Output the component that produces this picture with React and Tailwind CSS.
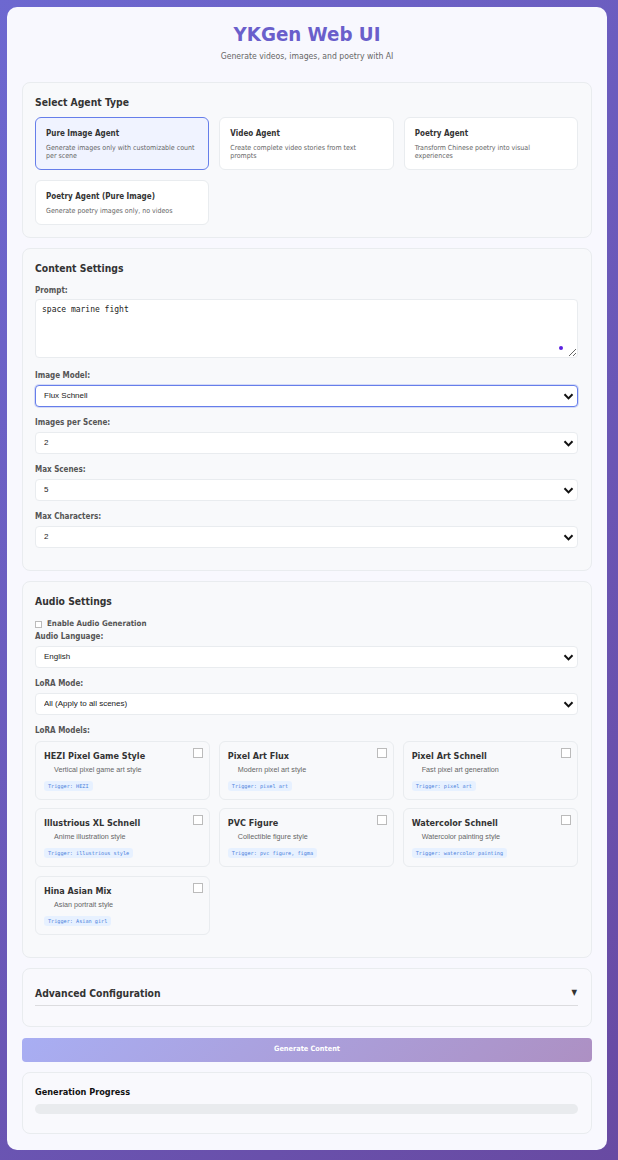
const font = "[font-family:'DejaVu_Sans',sans-serif] [font-stretch:condensed]";
const selectFont = "font-['Liberation_Sans',sans-serif]";
const monoFont = "font-['DejaVu_Sans_Mono',monospace] [font-stretch:normal]";

const agents = [
  { name: "Pure Image Agent", desc: "Generate images only with customizable count per scene", active: true },
  { name: "Video Agent", desc: "Create complete video stories from text prompts" },
  { name: "Poetry Agent", desc: "Transform Chinese poetry into visual experiences" },
  { name: "Poetry Agent (Pure Image)", desc: "Generate poetry images only, no videos" },
];

const loras = [
  { name: "HEZI Pixel Game Style", desc: "Vertical pixel game art style", trigger: "HEZI" },
  { name: "Pixel Art Flux", desc: "Modern pixel art style", trigger: "pixel art" },
  { name: "Pixel Art Schnell", desc: "Fast pixel art generation", trigger: "pixel art" },
  { name: "Illustrious XL Schnell", desc: "Anime illustration style", trigger: "illustrious style" },
  { name: "PVC Figure", desc: "Collectible figure style", trigger: "pvc figure, figma" },
  { name: "Watercolor Schnell", desc: "Watercolor painting style", trigger: "watercolor painting" },
  { name: "Hina Asian Mix", desc: "Asian portrait style", trigger: "Asian girl" },
];

function Section({ title, children }) {
  return (
    <section className="rounded-[8px] border border-[#e9ecef] bg-[#f8f9fb] pt-3 pr-[13px] pb-[11.5px] pl-3">
      {title && <h2 className="mb-[9.5px] text-[10.3px] leading-[14px] font-bold text-[#333]">{title}</h2>}
      {children}
    </section>
  );
}

function Label({ children }) {
  return <label className="mb-[2px] block text-[8px] leading-[12.5px] font-bold text-[#555]">{children}</label>;
}

function Select({ label, value, focused }) {
  return (
    <div className="mb-[10px]">
      <Label>{label}</Label>
      <div className="relative">
        <select
          defaultValue={value}
          className={`block h-[22.5px] w-full appearance-none rounded-[4px] border bg-white px-[8px] pt-[1px] ${selectFont} text-[8px] text-[#222] outline-none ${
            focused ? "border-[#667eea] shadow-[0_0_0_1px_rgba(102,126,234,0.25)]" : "border-[#e9ecef]"
          }`}
        >
          <option>{value}</option>
        </select>
        <svg className="absolute top-[7px] right-[4px] h-[9px] w-[11px]" viewBox="0 0 11 9" fill="none">
          <path d="M1.5 2.2 5.5 6.4 9.5 2.2" stroke="#111" strokeWidth="2" />
        </svg>
      </div>
    </div>
  );
}

function LoraCard({ name, desc, trigger }) {
  return (
    <div className="relative h-[59px] rounded-[6px] border border-[#e9ecef] bg-[#f8f9fb] px-[8px] pt-[8px]">
      <input type="checkbox" className="absolute top-[6px] right-[6px] h-[10px] w-[10px] appearance-none border border-[#bbb] bg-white" />
      <div className="text-[9px] leading-[13px] font-bold text-[#333]">{name}</div>
      <div className={`ml-[10px] ${selectFont} text-[7.2px] leading-[13px] text-[#666]`}>{desc}</div>
      <span className={`mt-[5px] block w-fit rounded-[3px] bg-[#e7f1ff] px-[4px] ${monoFont} text-[5.2px] leading-[10px] text-[#4a7fdc]`}>
        Trigger: {trigger}
      </span>
    </div>
  );
}

export default function App() {
  return (
    <div className={`min-h-[1160px] bg-[linear-gradient(135deg,#6d68d0,#684aa2)] py-[7px] pl-[7px] ${font}`}>
      <main className="h-[1143px] w-[600px] rounded-[10px] bg-[#f8f8fe] px-[15px] pt-[15px]">
        <header className="h-[59.5px] text-center">
          <h1 className="text-[20.3px] leading-[24px] font-bold text-[#6a5fcb]">YKGen Web UI</h1>
          <p className="mt-[4px] text-[8.6px] leading-[13px] text-[#666]">Generate videos, images, and poetry with AI</p>
        </header>

        <div className="flex flex-col gap-[10.5px]">
          <Section title="Select Agent Type">
            <div className="-mt-[1px] grid grid-cols-3 gap-x-[10px] gap-y-[10px]">
              {agents.map((a) => (
                <div
                  key={a.name}
                  className={`rounded-[6px] border px-[10px] pt-[10px] pb-[9.5px] ${
                    a.active ? "border-[#667eea] bg-[#f0f3ff]" : "border-[#e9ecef] bg-white"
                  }`}
                >
                  <div className="mb-[3.5px] text-[8px] leading-[12px] font-bold text-[#333]">{a.name}</div>
                  <div className="text-[7px] leading-[8px] text-[#666]">{a.desc}</div>
                </div>
              ))}
            </div>
          </Section>

          <Section title="Content Settings">
            <div className="mb-[12px]">
              <Label>Prompt:</Label>
              <div className="relative">
                <textarea
                  defaultValue="space marine fight"
                  className={`block h-[59px] w-full rounded-[4px] border border-[#e9ecef] bg-white px-[6px] py-[4px] ${monoFont} text-[8px] leading-[11px] text-[#222] outline-none`}
                />
                <span className="absolute right-[15px] bottom-[8px] h-[4px] w-[4px] rounded-full bg-[#5b21e0]" />
              </div>
            </div>
            <Select label="Image Model:" value="Flux Schnell" focused />
            <Select label="Images per Scene:" value="2" />
            <Select label="Max Scenes:" value="5" />
            <Select label="Max Characters:" value="2" />
          </Section>

          <Section title="Audio Settings">
            <label className="-mt-[0.5px] mb-[1px] flex h-[13px] items-center gap-[5px] text-[7.9px] font-bold text-[#555]">
              <input type="checkbox" className="mt-[2px] h-[7px] w-[7px] appearance-none border border-[#bbb] bg-white" />
              Enable Audio Generation
            </label>
            <Select label="Audio Language:" value="English" />
            <Select label="LoRA Mode:" value="All (Apply to all scenes)" />
            <div className="mb-[10.5px]">
              <label className="mb-[3px] block text-[8px] leading-[12.5px] font-bold text-[#555]">LoRA Models:</label>
              <div className="grid grid-cols-3 gap-[8.5px]">
                {loras.map((l) => (
                  <LoraCard key={l.name} {...l} />
                ))}
              </div>
            </div>
          </Section>

          <section className="h-[59px] rounded-[8px] border border-[#e9ecef] bg-[#f9f9fd] pt-3 pr-[13px] pl-3">
            <div className="flex h-[24.5px] items-center justify-between border-b border-[#dcdcdf] pt-[1px] text-[#333]">
              <h2 className="text-[10.3px] font-bold">Advanced Configuration</h2>
              <span className="pr-[1px] text-[8px]">▼</span>
            </div>
          </section>

          <button className="h-[24px] w-full rounded-[4px] bg-[linear-gradient(135deg,#a8aef3,#ad90c3)] text-[7.3px] font-bold text-white">
            Generate Content
          </button>

          <section className="h-[62px] rounded-[8px] border border-[#e9ecef] bg-[#f9f9fd] pt-3 pr-[13px] pl-3">
            <h2 className="mb-[5px] text-[9.1px] leading-[14px] font-bold text-[#111]">Generation Progress</h2>
            <div className="h-[10px] rounded-[5px] bg-[#e9ebee]" />
          </section>
        </div>
      </main>
    </div>
  );
}
